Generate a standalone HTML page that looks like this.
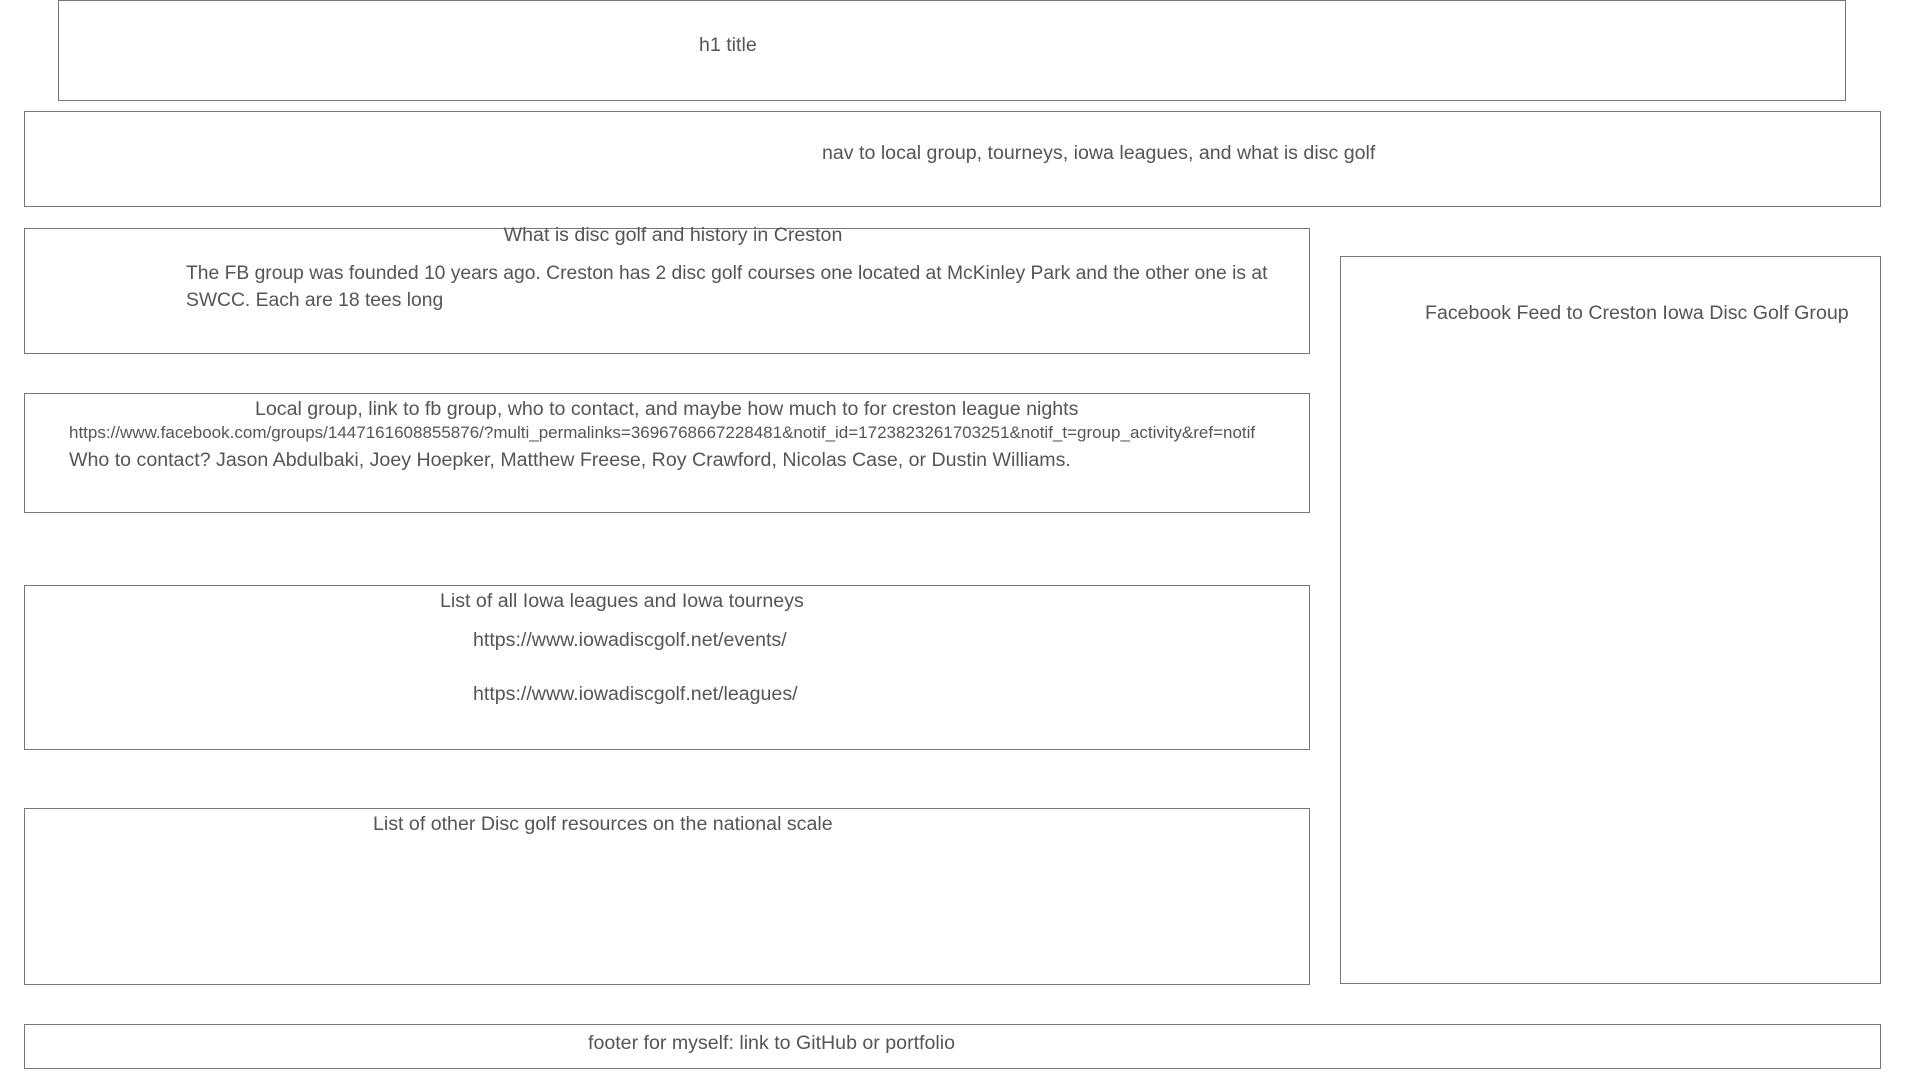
<!DOCTYPE html>
<html><head><meta charset="utf-8"><style>
body{margin:0;width:1920px;height:1080px;position:relative;background:#fff;font-family:"Liberation Sans",sans-serif;color:#555;overflow:hidden}
.b{position:absolute;border:1px solid #777;box-sizing:border-box}
.t{position:absolute;white-space:nowrap;font-size:19.6px;line-height:24px}
</style></head><body>
<div class="b" style="left:58px;top:0;width:1788px;height:101px"></div>
<div class="t" style="left:699px;top:33px">h1 title</div>
<div class="b" style="left:24px;top:111px;width:1857px;height:96px"></div>
<div class="t" style="left:822px;top:141px">nav to local group, tourneys, iowa leagues, and what is disc golf</div>

<div class="b" style="left:24px;top:228px;width:1286px;height:126px"></div>
<div class="t" style="left:673px;top:223px;transform:translateX(-50%)">What is disc golf and history in Creston</div>
<div class="t" style="left:186px;top:260px;white-space:normal;width:1120px;line-height:27px;font-size:19.3px">The FB group was founded 10 years ago. Creston has 2 disc golf courses one located at McKinley Park and the other one is at SWCC. Each are 18 tees long</div>

<div class="b" style="left:1340px;top:256px;width:541px;height:728px"></div>
<div class="t" style="left:1425px;top:301px">Facebook Feed to Creston Iowa Disc Golf Group</div>

<div class="b" style="left:24px;top:393px;width:1286px;height:120px"></div>
<div class="t" style="left:255px;top:397px">Local group, link to fb group, who to contact, and maybe how much to for creston league nights</div>
<div class="t" style="left:69px;top:423px;font-size:17px;line-height:20px">https://www.facebook.com/groups/1447161608855876/?multi_permalinks=3696768667228481&amp;notif_id=1723823261703251&amp;notif_t=group_activity&amp;ref=notif</div>
<div class="t" style="left:69px;top:448px">Who to contact? Jason Abdulbaki, Joey Hoepker, Matthew Freese, Roy Crawford, Nicolas Case, or Dustin Williams.</div>

<div class="b" style="left:24px;top:585px;width:1286px;height:165px"></div>
<div class="t" style="left:440px;top:589px">List of all Iowa leagues and Iowa tourneys</div>
<div class="t" style="left:473px;top:628px">https://www.iowadiscgolf.net/events/</div>
<div class="t" style="left:473px;top:682px">https://www.iowadiscgolf.net/leagues/</div>

<div class="b" style="left:24px;top:808px;width:1286px;height:177px"></div>
<div class="t" style="left:373px;top:812px">List of other Disc golf resources on the national scale</div>

<div class="b" style="left:24px;top:1024px;width:1857px;height:45px"></div>
<div class="t" style="left:588px;top:1031px">footer for myself: link to GitHub or portfolio</div>
</body></html>
